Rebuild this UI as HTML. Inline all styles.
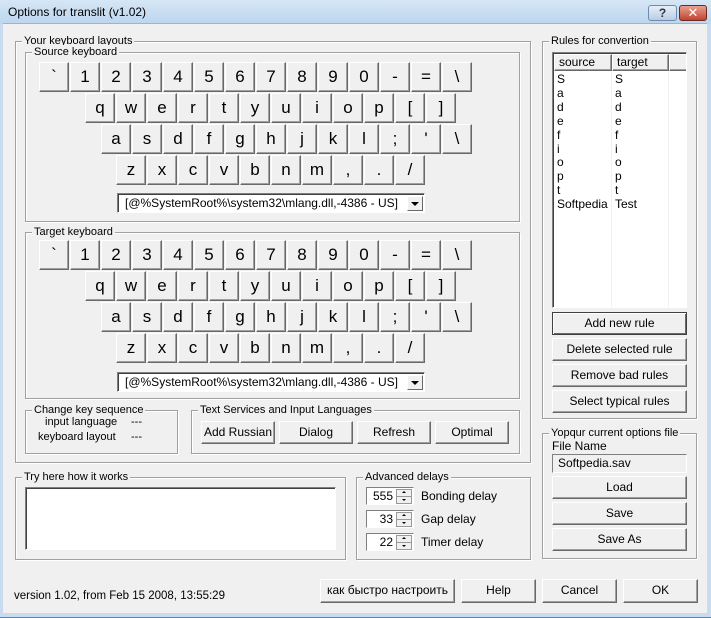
<!DOCTYPE html>
<html><head><meta charset="utf-8"><style>
*{box-sizing:border-box;margin:0;padding:0}
body{width:711px;height:618px;overflow:hidden;background:#c9dcef;font-family:"Liberation Sans","DejaVu Sans",sans-serif;font-size:11px;color:#000;position:relative}
.a{position:absolute}
#title{left:0;top:0;width:711px;height:24px;background:linear-gradient(#d6e6f5,#bcd5ee);}
#title span{position:absolute;left:8px;top:5px;font-size:12px}
#body{left:3px;top:23px;width:704px;height:590px;background:#f0f0f0;border-top:1px solid #a0b4c8}
#bot{left:0;top:614px;width:711px;height:4px;background:#c9dcef;border-bottom:1px solid #4a8ab0}
.g{position:absolute;border:1px solid #a0a0a0;box-shadow:inset 1px 1px 0 #fff,1px 1px 0 #fff}
.gl{position:absolute;top:-8px;left:6px;background:#f0f0f0;padding:0 2px;line-height:14px;white-space:nowrap}
.k{position:absolute;width:30px;height:30px;background:#f0f0f0;border:1px solid;border-color:#fff #696969 #696969 #fff;box-shadow:inset -1px -1px 0 #a0a0a0;font-size:17px;text-align:center;line-height:28px}
.b{position:absolute;background:#f0f0f0;border:1px solid;border-color:#fff #696969 #696969 #fff;box-shadow:inset -1px -1px 0 #a0a0a0;text-align:center;line-height:20px;font-size:12px}
.combo{position:absolute;width:308px;height:20px;background:#fff;border:1px solid;border-color:#808080 #fff #fff #808080;box-shadow:inset 1px 1px 0 #404040;font-size:12px;line-height:18px;padding-left:7px}
.combo i{position:absolute;right:1px;top:2px;width:16px;height:15px;background:#f0f0f0;border:1px solid;border-color:#fff #696969 #696969 #fff}
.combo i:after{content:"";position:absolute;left:3px;top:5px;border:4px solid transparent;border-top:4px solid #000;border-bottom:0}
.sp{position:absolute;width:48px;height:18px;background:#fff;border:1px solid;border-color:#808080 #fff #fff #808080;text-align:right;padding-right:20px;line-height:16px;font-size:12px}
.sp i{position:absolute;right:1px;top:1px;width:16px;height:15px;background:#f0f0f0;border:1px solid #999}
.sp i:before{content:"";position:absolute;left:0;right:0;top:6px;border-top:1px solid #999}
.sp b{position:absolute;left:5px;width:0;height:0;border:2px solid transparent}
.sp b.u{top:1px;border-bottom:2px solid #000;border-top:0}
.sp b.d{top:9px;border-top:2px solid #000;border-bottom:0}
.lb{font-size:12px}
</style></head><body>
<div id="title" class="a"><span>Options for translit (v1.02)</span>
<div class="a" style="left:648px;top:5px;width:29px;height:16px;border:1px solid #6d8bab;border-radius:3px;background:linear-gradient(#e6eff8,#b9cde2);text-align:center;font-size:12px;line-height:14px;color:#334;font-weight:bold">?</div>
<div class="a" style="left:679px;top:5px;width:28px;height:16px;border:1px solid #6b2a20;border-radius:3px;background:linear-gradient(#e8a090,#c04430);text-align:center;font-size:13px;line-height:14px;color:#fff;font-weight:bold">✕</div>
</div>
<div id="body" class="a"></div>
<div id="bot" class="a"></div>

<div class="g" style="left:15px;top:41px;width:516px;height:422px"><span class="gl">Your keyboard layouts</span></div>
<div class="g" style="left:25px;top:52px;width:495px;height:170px"><span class="gl">Source keyboard</span></div>
<div class="g" style="left:25px;top:232px;width:495px;height:167px"><span class="gl">Target keyboard</span></div>

<div class="k" style="left:39px;top:62px">`</div><div class="k" style="left:70px;top:62px">1</div><div class="k" style="left:101px;top:62px">2</div><div class="k" style="left:132px;top:62px">3</div><div class="k" style="left:163px;top:62px">4</div><div class="k" style="left:194px;top:62px">5</div><div class="k" style="left:225px;top:62px">6</div><div class="k" style="left:256px;top:62px">7</div><div class="k" style="left:287px;top:62px">8</div><div class="k" style="left:318px;top:62px">9</div><div class="k" style="left:349px;top:62px">0</div><div class="k" style="left:380px;top:62px">-</div><div class="k" style="left:411px;top:62px">=</div><div class="k" style="left:442px;top:62px">\</div>
<div class="k" style="left:85px;top:93px">q</div><div class="k" style="left:116px;top:93px">w</div><div class="k" style="left:147px;top:93px">e</div><div class="k" style="left:178px;top:93px">r</div><div class="k" style="left:209px;top:93px">t</div><div class="k" style="left:240px;top:93px">y</div><div class="k" style="left:271px;top:93px">u</div><div class="k" style="left:302px;top:93px">i</div><div class="k" style="left:333px;top:93px">o</div><div class="k" style="left:364px;top:93px">p</div><div class="k" style="left:395px;top:93px">[</div><div class="k" style="left:426px;top:93px">]</div>
<div class="k" style="left:101px;top:124px">a</div><div class="k" style="left:132px;top:124px">s</div><div class="k" style="left:163px;top:124px">d</div><div class="k" style="left:194px;top:124px">f</div><div class="k" style="left:225px;top:124px">g</div><div class="k" style="left:256px;top:124px">h</div><div class="k" style="left:287px;top:124px">j</div><div class="k" style="left:318px;top:124px">k</div><div class="k" style="left:349px;top:124px">l</div><div class="k" style="left:380px;top:124px">;</div><div class="k" style="left:411px;top:124px">'</div><div class="k" style="left:442px;top:124px">\</div>
<div class="k" style="left:116px;top:155px">z</div><div class="k" style="left:147px;top:155px">x</div><div class="k" style="left:178px;top:155px">c</div><div class="k" style="left:209px;top:155px">v</div><div class="k" style="left:240px;top:155px">b</div><div class="k" style="left:271px;top:155px">n</div><div class="k" style="left:302px;top:155px">m</div><div class="k" style="left:333px;top:155px">,</div><div class="k" style="left:364px;top:155px">.</div><div class="k" style="left:395px;top:155px">/</div>
<div class="combo" style="left:117px;top:193px">[@%SystemRoot%\system32\mlang.dll,-4386 - US]<i></i></div>

<div class="k" style="left:39px;top:240px">`</div><div class="k" style="left:70px;top:240px">1</div><div class="k" style="left:101px;top:240px">2</div><div class="k" style="left:132px;top:240px">3</div><div class="k" style="left:163px;top:240px">4</div><div class="k" style="left:194px;top:240px">5</div><div class="k" style="left:225px;top:240px">6</div><div class="k" style="left:256px;top:240px">7</div><div class="k" style="left:287px;top:240px">8</div><div class="k" style="left:318px;top:240px">9</div><div class="k" style="left:349px;top:240px">0</div><div class="k" style="left:380px;top:240px">-</div><div class="k" style="left:411px;top:240px">=</div><div class="k" style="left:442px;top:240px">\</div>
<div class="k" style="left:85px;top:271px">q</div><div class="k" style="left:116px;top:271px">w</div><div class="k" style="left:147px;top:271px">e</div><div class="k" style="left:178px;top:271px">r</div><div class="k" style="left:209px;top:271px">t</div><div class="k" style="left:240px;top:271px">y</div><div class="k" style="left:271px;top:271px">u</div><div class="k" style="left:302px;top:271px">i</div><div class="k" style="left:333px;top:271px">o</div><div class="k" style="left:364px;top:271px">p</div><div class="k" style="left:395px;top:271px">[</div><div class="k" style="left:426px;top:271px">]</div>
<div class="k" style="left:101px;top:302px">a</div><div class="k" style="left:132px;top:302px">s</div><div class="k" style="left:163px;top:302px">d</div><div class="k" style="left:194px;top:302px">f</div><div class="k" style="left:225px;top:302px">g</div><div class="k" style="left:256px;top:302px">h</div><div class="k" style="left:287px;top:302px">j</div><div class="k" style="left:318px;top:302px">k</div><div class="k" style="left:349px;top:302px">l</div><div class="k" style="left:380px;top:302px">;</div><div class="k" style="left:411px;top:302px">'</div><div class="k" style="left:442px;top:302px">\</div>
<div class="k" style="left:116px;top:333px">z</div><div class="k" style="left:147px;top:333px">x</div><div class="k" style="left:178px;top:333px">c</div><div class="k" style="left:209px;top:333px">v</div><div class="k" style="left:240px;top:333px">b</div><div class="k" style="left:271px;top:333px">n</div><div class="k" style="left:302px;top:333px">m</div><div class="k" style="left:333px;top:333px">,</div><div class="k" style="left:364px;top:333px">.</div><div class="k" style="left:395px;top:333px">/</div>
<div class="combo" style="left:117px;top:372px">[@%SystemRoot%\system32\mlang.dll,-4386 - US]<i></i></div>

<div class="g" style="left:25px;top:410px;width:153px;height:44px"><span class="gl">Change key sequence</span></div>
<div class="a" style="left:45px;top:416px">input language</div><div class="a" style="left:131px;top:416px">---</div>
<div class="a" style="left:38px;top:431px">keyboard layout</div><div class="a" style="left:131px;top:431px">---</div>

<div class="g" style="left:191px;top:410px;width:329px;height:44px"><span class="gl">Text Services and Input Languages</span></div>
<div class="b" style="left:201px;top:421px;width:74px;height:23px">Add Russian</div>
<div class="b" style="left:279px;top:421px;width:74px;height:23px">Dialog</div>
<div class="b" style="left:357px;top:421px;width:74px;height:23px">Refresh</div>
<div class="b" style="left:435px;top:421px;width:74px;height:23px">Optimal</div>

<div class="g" style="left:15px;top:477px;width:331px;height:83px"><span class="gl">Try here how it works</span></div>
<div class="a" style="left:25px;top:487px;width:311px;height:63px;background:#fff;border:1px solid;border-color:#808080 #fff #fff #808080;box-shadow:inset 1px 1px 0 #404040"></div>

<div class="g" style="left:356px;top:477px;width:175px;height:83px"><span class="gl">Advanced delays</span></div>
<div class="sp" style="left:366px;top:487px">555<i><b class="u"></b><b class="d"></b></i></div><div class="a lb" style="left:421px;top:489px">Bonding delay</div>
<div class="sp" style="left:366px;top:510px">33<i><b class="u"></b><b class="d"></b></i></div><div class="a lb" style="left:421px;top:512px">Gap delay</div>
<div class="sp" style="left:366px;top:533px">22<i><b class="u"></b><b class="d"></b></i></div><div class="a lb" style="left:421px;top:535px">Timer delay</div>

<div class="g" style="left:542px;top:41px;width:155px;height:378px"><span class="gl">Rules for convertion</span></div>
<div class="a" style="left:552px;top:52px;width:135px;height:256px;background:#fff;border:1px solid;border-color:#808080 #fff #fff #808080;box-shadow:inset 1px 1px 0 #404040;overflow:hidden">
<div class="a" style="left:1px;top:1px;width:133px;height:17px;background:#f0f0f0;border-bottom:1px solid #a0a0a0"></div>
<div class="a" style="left:58px;top:1px;width:1px;height:255px;background:#f0f0f0"></div>
<div class="a" style="left:115px;top:1px;width:1px;height:255px;background:#f0f0f0"></div>
<div class="b" style="left:1px;top:1px;width:58px;height:17px;line-height:15px;text-align:left;padding-left:4px">source</div>
<div class="b" style="left:59px;top:1px;width:57px;height:17px;line-height:15px;text-align:left;padding-left:4px">target</div>
<div class="b" style="left:116px;top:1px;width:22px;height:17px"></div>
<div class="a" style="left:4px;top:20px;line-height:13.9px;font-size:12px">S<br>a<br>d<br>e<br>f<br>i<br>o<br>p<br>t<br>Softpedia</div>
<div class="a" style="left:62px;top:20px;line-height:13.9px;font-size:12px">S<br>a<br>d<br>e<br>f<br>i<br>o<br>p<br>t<br>Test</div>
</div>
<div class="b" style="left:552px;top:312px;width:135px;height:23px;border-color:#404040;box-shadow:inset 1px 1px 0 #fff,inset -1px -1px 0 #696969">Add new rule</div>
<div class="b" style="left:552px;top:338px;width:135px;height:23px">Delete selected rule</div>
<div class="b" style="left:552px;top:364px;width:135px;height:23px">Remove bad rules</div>
<div class="b" style="left:552px;top:390px;width:135px;height:23px">Select typical rules</div>

<div class="g" style="left:542px;top:433px;width:155px;height:126px"><span class="gl">Yopqur current options file</span></div>
<div class="a lb" style="left:552px;top:439px">File Name</div>
<div class="a" style="left:552px;top:454px;width:135px;height:19px;border:1px solid;border-color:#808080 #fff #fff #808080;padding-left:5px;line-height:17px;font-size:12px">Softpedia.sav</div>
<div class="b" style="left:552px;top:476px;width:135px;height:23px">Load</div>
<div class="b" style="left:552px;top:502px;width:135px;height:23px">Save</div>
<div class="b" style="left:552px;top:528px;width:135px;height:23px">Save As</div>

<div class="a lb" style="left:14px;top:590px;font-size:11.5px">version 1.02, from Feb 15 2008, 13:55:29</div>
<div class="b" style="left:320px;top:579px;width:135px;height:24px">как быстро настроить</div>
<div class="b" style="left:461px;top:579px;width:75px;height:24px">Help</div>
<div class="b" style="left:542px;top:579px;width:75px;height:24px">Cancel</div>
<div class="b" style="left:623px;top:579px;width:75px;height:24px">OK</div>
</body></html>
